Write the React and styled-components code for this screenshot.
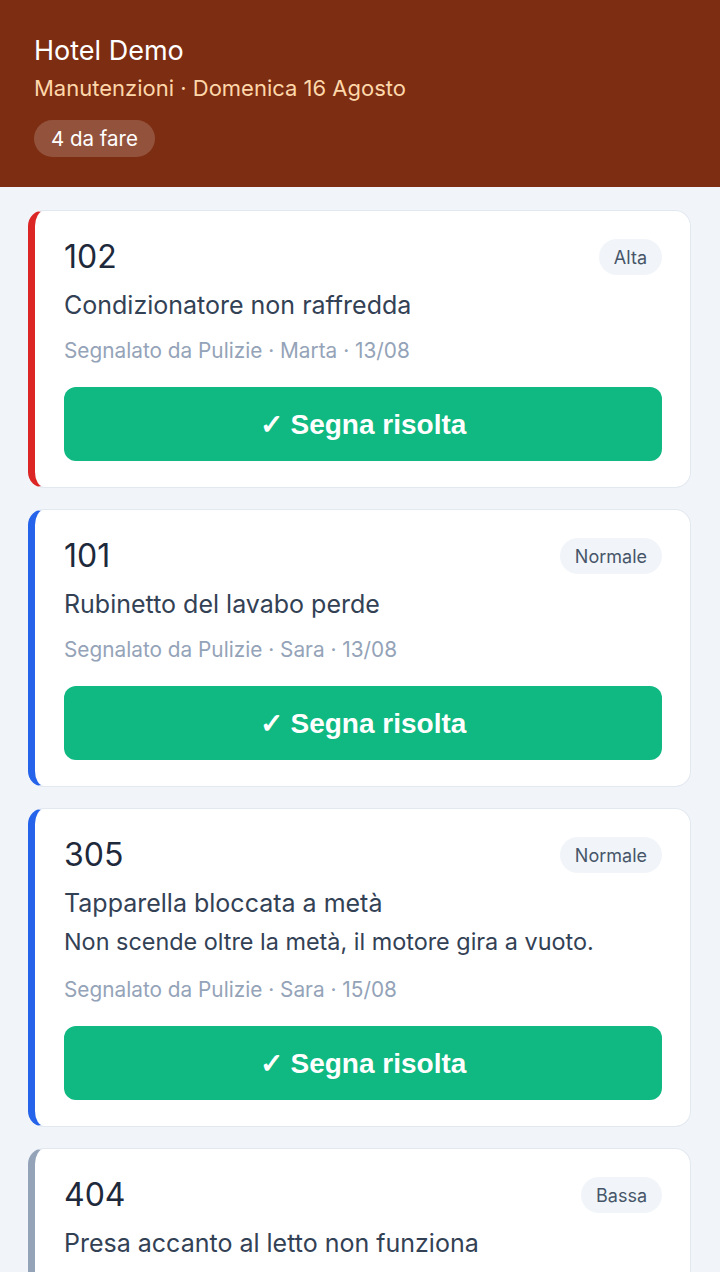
import React from "react";
import styled, { createGlobalStyle } from "styled-components";

const GlobalStyle = createGlobalStyle`
  body {
    margin: 0;
    background: #f1f5f9;
    font-family: Inter, Roboto, "Liberation Sans", sans-serif;
  }
`;

const Page = styled.div`
  min-height: 1272px;
  background: #f1f5f9;
`;

const Header = styled.header`
  background: #7c2d12;
  padding: 35px 34px 30px;
  display: flex;
  flex-direction: column;
  align-items: flex-start;
`;

const HotelName = styled.h1`
  margin: 0;
  font-size: 27px;
  line-height: 32px;
  font-weight: 400;
  color: #ffffff;
`;

const SubTitle = styled.div`
  margin-top: 8px;
  font-size: 22px;
  line-height: 27px;
  color: #fed7aa;
`;

const CountPill = styled.div`
  margin-top: 18px;
  padding: 6px 17px;
  font-size: 20.5px;
  line-height: 25px;
  color: #ffffff;
  background: rgba(255, 255, 255, 0.18);
  border-radius: 999px;
`;

const List = styled.main`
  padding: 23px 29px 0 28px;
  display: flex;
  flex-direction: column;
  gap: 21px;
`;

const Card = styled.section`
  background: #ffffff;
  border: 1px solid #e2e8f0;
  border-left: 7px solid ${p => p.$accent};
  border-radius: 16px;
  padding: 28px 28px 26px 29px;
  display: flex;
  flex-direction: column;
`;

const CardTop = styled.div`
  display: flex;
  align-items: center;
  justify-content: space-between;
  height: 36px;
`;

const Room = styled.div`
  font-size: 32px;
  line-height: 36px;
  color: #1e293b;
`;

const Priority = styled.span`
  height: 36px;
  padding: 0 15px;
  display: flex;
  align-items: center;
  font-size: 18px;
  color: #475569;
  background: #f1f5f9;
  border-radius: 999px;
`;

const Issue = styled.div`
  margin-top: 13px;
  font-size: 25px;
  line-height: 34px;
  color: #334155;
`;

const Note = styled.div`
  margin-top: 6px;
  font-size: 23.4px;
  line-height: 32px;
  color: #334155;
`;

const Meta = styled.div`
  margin-top: ${p => (p.$afterNote ? 19 : 16)}px;
  font-size: 20.8px;
  line-height: 26px;
  color: #94a3b8;
`;

const ResolveButton = styled.button`
  margin-top: 23px;
  height: 74px;
  border: none;
  border-radius: 12px;
  background: #10b981;
  color: #ffffff;
  font-family: "Liberation Sans", Arial, sans-serif;
  font-size: 28px;
  font-weight: 700;
  cursor: pointer;
`;

const tickets = [
  { room: "102", priority: "Alta", accent: "#dc2626", issue: "Condizionatore non raffredda", who: "Marta", date: "13/08" },
  { room: "101", priority: "Normale", accent: "#2563eb", issue: "Rubinetto del lavabo perde", who: "Sara", date: "13/08" },
  { room: "305", priority: "Normale", accent: "#2563eb", issue: "Tapparella bloccata a metà", note: "Non scende oltre la metà, il motore gira a vuoto.", who: "Sara", date: "15/08" },
  { room: "404", priority: "Bassa", accent: "#94a3b8", issue: "Presa accanto al letto non funziona", who: "Sara", date: "15/08" },
];

export default function App() {
  return (
    <Page>
      <GlobalStyle />
      <Header>
        <HotelName>Hotel Demo</HotelName>
        <SubTitle>Manutenzioni · Domenica 16 Agosto</SubTitle>
        <CountPill>4 da fare</CountPill>
      </Header>
      <List>
        {tickets.map(t => (
          <Card key={t.room} $accent={t.accent}>
            <CardTop>
              <Room>{t.room}</Room>
              <Priority>{t.priority}</Priority>
            </CardTop>
            <Issue>{t.issue}</Issue>
            {t.note && <Note>{t.note}</Note>}
            <Meta $afterNote={!!t.note}>Segnalato da Pulizie · {t.who} · {t.date}</Meta>
            <ResolveButton>✓ Segna risolta</ResolveButton>
          </Card>
        ))}
      </List>
    </Page>
  );
}
